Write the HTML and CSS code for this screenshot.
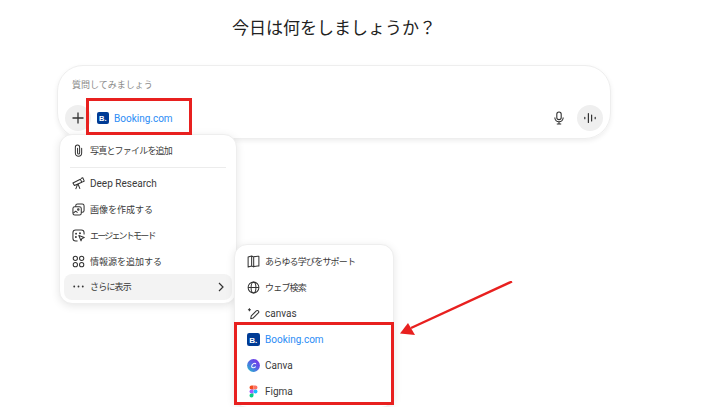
FILE: index.html
```html
<!DOCTYPE html>
<html lang="ja">
<head>
    <meta charset="UTF-8">
    <meta name="viewport" content="width=device-width, initial-scale=1.0">
    <title>今日は何をしましょうか？</title>
    <link rel="stylesheet" href="styles.css">
</head>
<body>
    <div class="page">
        <h1 class="title">今日は何をしましょうか？</h1>

        <div class="composer">
            <div class="placeholder">質問してみましょう</div>
            <div class="composer-row">
                <div class="round-btn plus-btn">
                    <svg width="14" height="14" viewBox="0 0 14 14"><path d="M7 1.5v11M1.5 7h11" stroke="#333" stroke-width="1.3" fill="none"/></svg>
                </div>
                <div class="chip">
                    <svg class="logo" viewBox="0 0 12 12"><rect width="12" height="12" rx="2" fill="#003b95"/><text x="2" y="9" class="logo-b">B.</text></svg>
                    <span class="blue">Booking.com</span>
                </div>
                <div class="spacer"></div>
                <svg class="mic" width="14" height="14" viewBox="0 0 14 14" fill="none" stroke="#333" stroke-width="1.1"><rect x="4.8" y="1" width="4.4" height="7.6" rx="2.2"/><path d="M2.8 6.6a4.2 4.2 0 0 0 8.4 0M7 10.8v2M4.8 13h4.4"/></svg>
                <div class="round-btn voice-btn">
                    <svg width="14" height="14" viewBox="0 0 14 14" stroke="#333" stroke-width="1.2" stroke-linecap="round"><path d="M1.8 6.3v1.4M5.4 2.6v8.8M8.6 4v6M12.2 6.3v1.4"/></svg>
                </div>
            </div>
        </div>

        <!-- first menu -->
        <div class="menu menu-main">
            <div class="item">
                <svg class="ico" viewBox="0 0 14 14" fill="none" stroke="#333" stroke-width="1.1" stroke-linecap="round"><path d="M10.4 4.500v5.300a3.400 3.400 0 0 1-6.800 0V3.400a2.300 2.300 0 0 1 4.600 0v6.200a1.100 1.100 0 0 1-2.200 0V4.500"/></svg>
                <span class="ja tight">写真とファイルを追加</span>
            </div>
            <div class="divider"></div>
            <div class="item">
                <svg class="ico" viewBox="0 0 14 14" fill="none" stroke="#333" stroke-width="1.1" stroke-linejoin="round"><path d="M1 6.4l8-4 1.6 3.2-8 3.600zM9.600 1.600l2-.8 1.600 3.600-2 .9M6 8l-2 5M6.600 7.800l2 5"/></svg>
                <span>Deep Research</span>
            </div>
            <div class="item">
                <svg class="ico" viewBox="0 0 14 14" fill="none" stroke="#333" stroke-width="1.1" stroke-linejoin="round"><rect x="1" y="4" width="9" height="9" rx="2"/><path d="M4 4V3a2 2 0 0 1 2-2h5a2 2 0 0 1 2 2v5a2 2 0 0 1-2 2h-1M1.400 11l2.600-2.200 2 1.600"/><circle cx="6.800" cy="7" r=".8"/></svg>
                <span class="ja">画像を作成する</span>
            </div>
            <div class="item">
                <svg class="ico" viewBox="0 0 14 14" fill="none" stroke="#333" stroke-width="1.1" stroke-linejoin="round"><path d="M6 13H4a3 3 0 0 1-3-3V4a3 3 0 0 1 3-3h6a3 3 0 0 1 3 3v2"/><path d="M7.400 7l5.800 2.200-2.500 1-1 2.600z"/><circle cx="4.400" cy="5" r=".5"/><circle cx="8.600" cy="4.600" r=".5"/><circle cx="4.200" cy="8.600" r=".5"/></svg>
                <span class="ja tighter">エージェントモード</span>
            </div>
            <div class="item">
                <svg class="ico" viewBox="0 0 14 14" fill="none" stroke="#333" stroke-width="1.1"><circle cx="3.600" cy="3.600" r="2.300"/><circle cx="10.400" cy="3.600" r="2.300"/><circle cx="3.600" cy="10.400" r="2.300"/><circle cx="10.400" cy="10.400" r="2.300"/></svg>
                <span class="ja">情報源を追加する</span>
            </div>
            <div class="item item-active">
                <svg class="ico" viewBox="0 0 14 14" fill="#333"><circle cx="2.400" cy="7" r="1"/><circle cx="7" cy="7" r="1"/><circle cx="11.600" cy="7" r="1"/></svg>
                <span class="ja tight">さらに表示</span>
                <svg class="chevron" width="8" height="10" viewBox="0 0 8 10" fill="none" stroke="#333" stroke-width="1.2"><path d="M2 1l4 4-4 4"/></svg>
            </div>
        </div>

        <!-- submenu -->
        <div class="menu menu-sub">
            <div class="item">
                <svg class="ico" viewBox="0 0 14 14" fill="none" stroke="#333" stroke-width="1.1" stroke-linejoin="round"><path d="M1.200 2.200L5 1v10.800l-3.800 1.200zM5 1l2.200 1.200v10.600L5 11.800M7.200 2.200C9 1.400 11 1.200 12.800 1.400v10.400c-1.800-.2-3.800 0-5.600 1"/></svg>
                <span class="ja tight">あらゆる学びをサポート</span>
            </div>
            <div class="item">
                <svg class="ico" viewBox="0 0 14 14" fill="none" stroke="#333" stroke-width="1.1"><circle cx="7" cy="7" r="5.800"/><ellipse cx="7" cy="7" rx="2.600" ry="5.800"/><path d="M1.200 7h11.600"/></svg>
                <span class="ja tight">ウェブ検索</span>
            </div>
            <div class="item">
                <svg class="ico" viewBox="0 0 14 14" fill="none" stroke="#333" stroke-width="1.1" stroke-linejoin="round"><path d="M4 12.600l.6-3L10 4.200a1.500 1.500 0 0 1 2.200 2.200L6.800 11.800z"/><path d="M2.600 1.400v3.200M1 3h3.200"/></svg>
                <span>canvas</span>
            </div>
            <div class="item">
                <svg class="ico" viewBox="0 0 12 12"><rect width="12" height="12" rx="2" fill="#003b95"/><text x="2" y="9" class="logo-b">B.</text></svg>
                <span class="blue">Booking.com</span>
            </div>
            <div class="item">
                <svg class="ico" viewBox="0 0 14 14"><defs><linearGradient id="canva" x1="0" y1="1" x2="1" y2="0"><stop offset="0" stop-color="#20c4cb"/><stop offset=".55" stop-color="#5a5ce6"/><stop offset="1" stop-color="#7d2ae8"/></linearGradient></defs><circle cx="7" cy="7" r="6.900" fill="url(#canva)"/><path d="M9.400 5.200C8.800 3.800 5.200 5.200 5 8c-.1 1.800 2.400 2 4 .4" fill="none" stroke="#fff" stroke-width="1.100" stroke-linecap="round"/></svg>
                <span>Canva</span>
            </div>
            <div class="item">
                <svg class="ico" viewBox="0 0 14 14"><path d="M4.850.5H7v4.300H4.850a2.150 2.150 0 0 1 0-4.300z" fill="#f24e1e"/><path d="M7 .5h2.150a2.150 2.150 0 0 1 0 4.300H7z" fill="#ff7262"/><path d="M4.850 4.800H7v4.300H4.850a2.150 2.150 0 0 1 0-4.300z" fill="#a259ff"/><circle cx="9.150" cy="6.950" r="2.150" fill="#1abcfe"/><path d="M4.850 9.100H7v2.150a2.150 2.150 0 1 1-2.150-2.150z" fill="#0acf83"/></svg>
                <span>Figma</span>
            </div>
        </div>

        <!-- red annotations drawn over the screenshot -->
        <div class="mark mark-chip"></div>
        <div class="mark mark-list"></div>
        <svg class="arrow" width="125" height="60" viewBox="0 0 125 60"><path d="M112 .5L11 47" stroke="#e8201f" stroke-width="2.400"/><path d="M0 52.500L8 42l7 12z" fill="#e8201f"/></svg>
    </div>
</body>
</html>
```

FILE: styles.css
```css
* {
    box-sizing: border-box;
}
body {
    margin: 0;
    background: white;
    font-family: Roboto, "Noto Sans CJK JP", sans-serif;
    color: #333;
}
.page {
    position: relative;
    width: 720px;
    height: 407px;
    overflow: hidden;
    padding: 15px 57px 0;
}
.title {
    width: 554px;
    margin: 0 0 26px;
    height: 24px;
    line-height: 24px;
    text-align: center;
    font-family: "Noto Sans CJK JP", sans-serif;
    font-size: 17px;
    font-weight: 400;
    color: #222;
}
.composer {
    width: 554px;
    height: 74px;
    padding: 12px 7px 0;
    border: 1px solid #eee;
    border-radius: 26px;
    box-shadow: 0 2px 5px rgba(0,0,0,0.07);
}
.placeholder {
    padding-left: 7px;
    height: 14px;
    line-height: 14px;
    font-family: "Noto Sans CJK JP", sans-serif;
    font-size: 9px;
    color: #8a8a8a;
}
.composer-row {
    display: flex;
    align-items: center;
    margin-top: 13px;
}
.round-btn {
    display: flex;
    align-items: center;
    justify-content: center;
    width: 26px;
    height: 26px;
    border-radius: 50%;
    background: #efefef;
}
.chip {
    display: flex;
    align-items: center;
    gap: 5px;
    margin-left: 6px;
    font-size: 10px;
}
.logo {
    width: 12px;
    height: 12px;
}
.logo-b {
    font-family: "Liberation Sans", sans-serif;
    font-size: 7.500px;
    font-weight: 700;
    fill: white;
}
.blue {
    color: #2b8cf5;
}
.spacer {
    flex: 1;
}
.mic {
    margin-right: 11px;
}
.menu {
    position: absolute;
    padding: 3px 4px;
    background: white;
    border: 1px solid #eee;
    border-radius: 13px;
    box-shadow: 0 2px 8px rgba(0,0,0,0.1);
    font-size: 10px;
}
.menu-main {
    left: 59px;
    top: 134px;
    width: 178px;
    height: 170px;
}
.menu-sub {
    left: 234px;
    top: 244px;
    width: 160px;
    height: 164px;
}
.item {
    display: flex;
    align-items: center;
    gap: 5px;
    height: 26px;
    padding: 0 8px;
    border-radius: 8px;
    color: #3a3a3a;
}
.menu-main .item {
    height: 25.800px;
}
.item-active {
    background: #f3f3f3;
}
.ico {
    flex-shrink: 0;
    width: 13px;
    height: 13px;
}
.ja {
    font-family: "Noto Sans CJK JP", sans-serif;
    font-size: 9px;
}
.tight {
    letter-spacing: -0.8px;
}
.tighter {
    letter-spacing: -1.8px;
}
.chevron {
    margin-left: auto;
    margin-right: -1px;
}
.divider {
    height: 1px;
    margin: 3px 6px 3px;
    background: #ececec;
}
.mark {
    position: absolute;
    border: 3px solid #e8201f;
}
.mark-chip {
    left: 86px;
    top: 98px;
    width: 106px;
    height: 37px;
}
.mark-list {
    left: 234px;
    top: 322px;
    width: 160px;
    height: 83px;
}
.arrow {
    position: absolute;
    left: 400px;
    top: 281px;
}
```
